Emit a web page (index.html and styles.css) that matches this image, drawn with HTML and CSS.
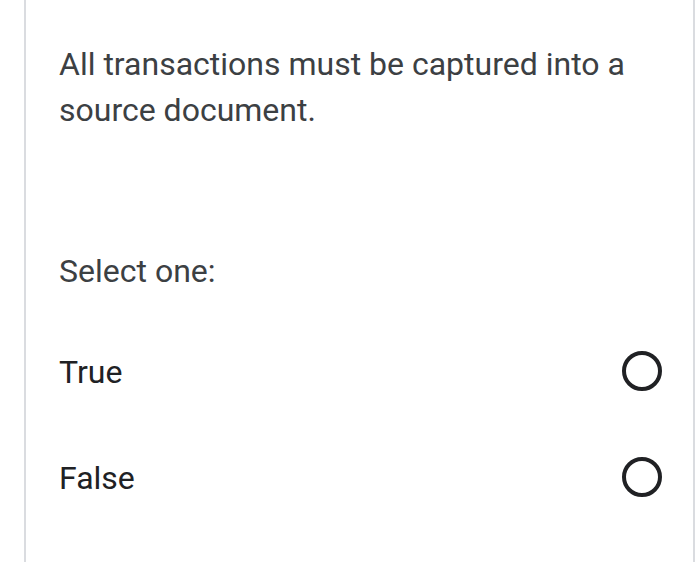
FILE: index.html
```html
<!DOCTYPE html>
<html>
<head>
<meta charset="utf-8">
<link rel="stylesheet" href="styles.css">
</head>
<body>
<div class="card">
  <div class="question">All transactions must be captured into a source document.</div>
  <div class="prompt">Select one:</div>
  <div class="options">
    <label class="option"><span class="label">True</span><span class="radio"></span></label>
    <label class="option"><span class="label">False</span><span class="radio"></span></label>
  </div>
</div>
</body>
</html>
```
FILE: styles.css
```css
html, body {
  margin: 0;
  padding: 0;
  background: #ffffff;
  overflow: hidden;
}
body {
  font-family: Roboto, "Liberation Sans", sans-serif;
}
.card {
  margin-left: 24px;
  width: 671px;
  height: 562px;
  box-sizing: border-box;
  border-left: 2px solid #dadce0;
  border-right: 2px solid #dadce0;
  padding: 41px 31px 0 33px;
}
.question {
  font-size: 32px;
  line-height: 46px;
  color: #3c4043;
}
.prompt {
  margin-top: 115px;
  font-size: 32px;
  line-height: 46px;
  color: #3c4043;
}
.options {
  margin-top: 55px;
  display: flex;
  flex-direction: column;
  gap: 60px;
}
.option {
  display: flex;
  align-items: center;
  justify-content: space-between;
  height: 46px;
}
.label {
  font-size: 32px;
  line-height: 46px;
  color: #202124;
}
.radio {
  width: 32px;
  height: 32px;
  border: 4px solid #202124;
  border-radius: 50%;
  margin-top: -2px;
}
```
